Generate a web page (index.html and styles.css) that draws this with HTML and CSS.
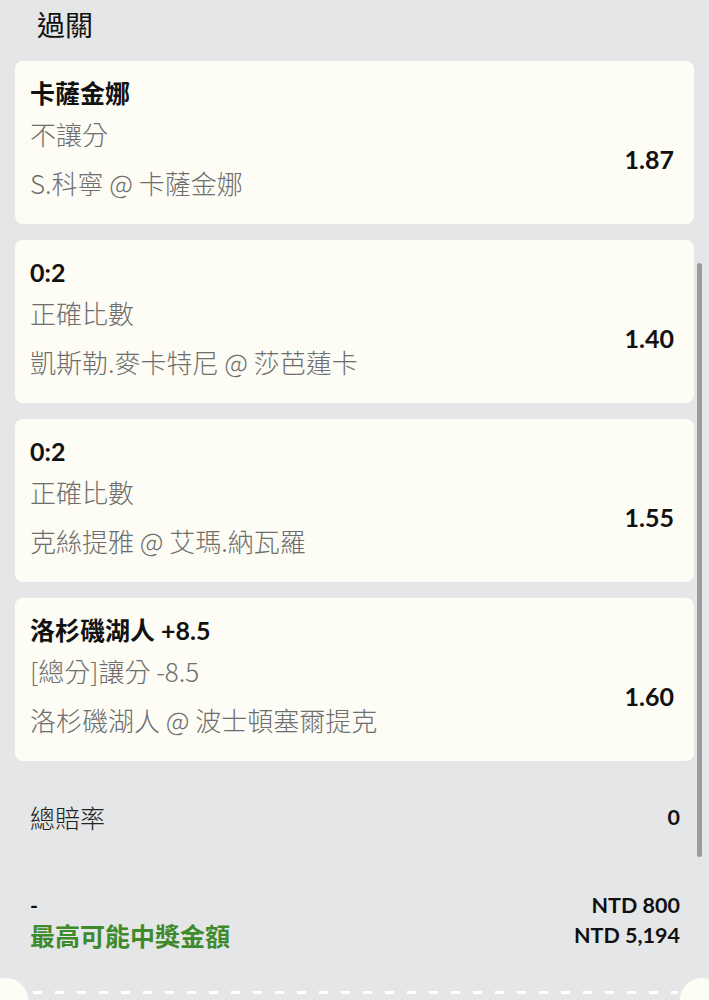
FILE: index.html
```html
<!DOCTYPE html>
<html lang="zh-Hant">
<head>
    <meta charset="UTF-8">
    <meta name="viewport" content="width=device-width, initial-scale=1.0">
    <title>過關</title>
    <link rel="stylesheet" href="styles.css">
</head>
<body>
    <div class="slip">
        <h1 class="slip-title">過關</h1>

        <div class="bet-list">
            <div class="bet-card">
                <div class="bet-pick">卡薩金娜</div>
                <div class="bet-body">
                    <div class="bet-info">
                        <div class="bet-market">不讓分</div>
                        <div class="bet-match">S.科寧 @ 卡薩金娜</div>
                    </div>
                    <div class="bet-odds">1.87</div>
                </div>
            </div>
            <div class="bet-card">
                <div class="bet-pick">0:2</div>
                <div class="bet-body">
                    <div class="bet-info">
                        <div class="bet-market">正確比數</div>
                        <div class="bet-match">凱斯勒.麥卡特尼 @ 莎芭蓮卡</div>
                    </div>
                    <div class="bet-odds">1.40</div>
                </div>
            </div>
            <div class="bet-card">
                <div class="bet-pick">0:2</div>
                <div class="bet-body">
                    <div class="bet-info">
                        <div class="bet-market">正確比數</div>
                        <div class="bet-match">克絲提雅 @ 艾瑪.納瓦羅</div>
                    </div>
                    <div class="bet-odds">1.55</div>
                </div>
            </div>
            <div class="bet-card">
                <div class="bet-pick">洛杉磯湖人 +8.5</div>
                <div class="bet-body">
                    <div class="bet-info">
                        <div class="bet-market">[總分]讓分 -8.5</div>
                        <div class="bet-match">洛杉磯湖人 @ 波士頓塞爾提克</div>
                    </div>
                    <div class="bet-odds">1.60</div>
                </div>
            </div>
        </div>

        <div class="total-row">
            <span class="total-label">總賠率</span>
            <span class="total-value">0</span>
        </div>

        <div class="payout">
            <div class="payout-row">
                <span class="stake-label">-</span>
                <span class="amount">NTD 800</span>
            </div>
            <div class="payout-row">
                <span class="win-label">最高可能中獎金額</span>
                <span class="amount">NTD 5,194</span>
            </div>
        </div>

        <div class="ticket-edge">
            <span class="notch notch-left"></span>
            <span class="notch notch-right"></span>
        </div>

        <div class="scrollbar"></div>
    </div>
</body>
</html>
```

FILE: styles.css
```css
body {
    margin: 0;
    padding: 0;
    background-color: #e5e6e8;
    font-family: "Noto Sans CJK TC", "Noto Sans", sans-serif;
    color: #111;
}
.slip {
    position: relative;
    height: 1000px;
    overflow: hidden;
}
.slip-title {
    margin: 0;
    padding: 5px 0 0 37px;
    height: 55px;
    box-sizing: border-box;
    font-size: 28px;
    font-weight: 400;
    line-height: 38px;
    color: #111;
}
.bet-list {
    display: flex;
    flex-direction: column;
    gap: 16px;
    padding: 6px 15px 0 15px;
}
.bet-card {
    background: #fdfcf5;
    border-radius: 8px;
    height: 163px;
    box-sizing: border-box;
    padding: 17px 20px 0 15px;
}
.bet-pick {
    font-family: "Lato", "Noto Sans CJK TC", sans-serif;
    font-weight: 700;
    font-size: 25px;
    line-height: 30px;
    color: #111;
}
.bet-body {
    display: flex;
    align-items: center;
    justify-content: space-between;
    margin-top: 11px;
}
.bet-info {
    display: flex;
    flex-direction: column;
    gap: 19px;
}
.bet-market, .bet-match {
    font-size: 26px;
    font-weight: 300;
    line-height: 30px;
    color: #6e6e6e;
}
.bet-odds {
    font-family: "Lato", sans-serif;
    font-weight: 700;
    font-size: 25px;
    color: #111;
}
.total-row {
    display: flex;
    justify-content: space-between;
    align-items: center;
    padding: 40px 29px 0 30px;
    height: 72px;
    box-sizing: border-box;
}
.total-label {
    font-size: 25px;
    font-weight: 300;
    color: #222;
}
.total-value {
    font-family: "Lato", sans-serif;
    font-weight: 700;
    font-size: 21.5px;
}
.payout {
    padding: 57px 29px 0 30px;
}
.payout-row {
    display: flex;
    justify-content: space-between;
    align-items: center;
    height: 30px;
}
.stake-label {
    font-family: "Lato", sans-serif;
    font-weight: 700;
    font-size: 21.5px;
}
.win-label {
    font-size: 25px;
    font-weight: 700;
    color: #3f8a2d;
}
.amount {
    font-family: "Lato", sans-serif;
    font-weight: 700;
    font-size: 21.5px;
}
.ticket-edge {
    position: absolute;
    left: 33px;
    right: 31px;
    top: 991px;
    height: 3px;
    background: repeating-linear-gradient(90deg, #fff 0, #fff 9px, transparent 9px, transparent 22px);
}
.notch {
    position: absolute;
    top: -13px;
    width: 44px;
    height: 44px;
    border-radius: 50%;
    background: #fdfcf5;
}
.notch-left {
    left: -49px;
}
.notch-right {
    right: -46px;
}
.scrollbar {
    position: absolute;
    left: 697px;
    top: 263px;
    width: 5px;
    height: 594px;
    border-radius: 3px;
    background: #9b9b9b;
}
```
